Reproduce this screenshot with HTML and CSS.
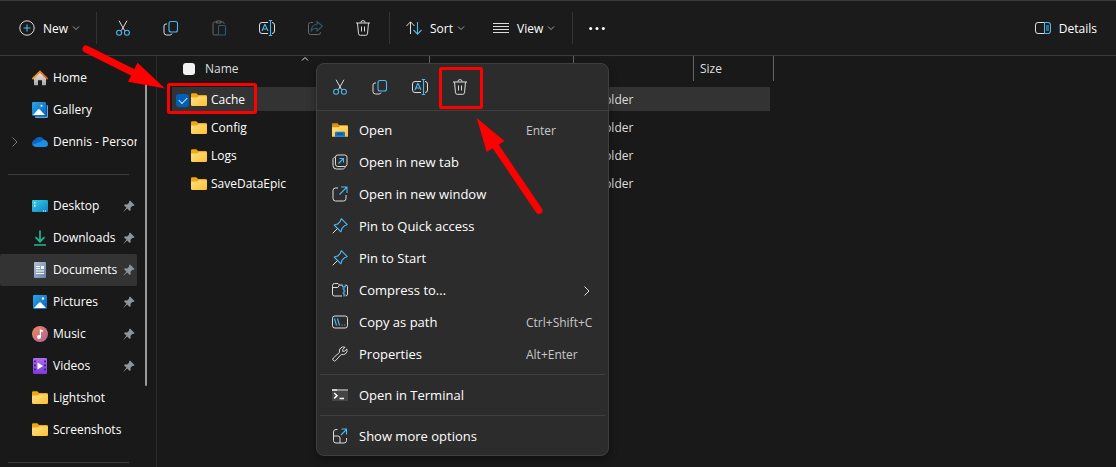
FILE: index.html
```html
<!DOCTYPE html>
<html lang="en">
<head>
<meta charset="utf-8">
<title>Documents</title>
<link rel="stylesheet" href="styles.css">
</head>
<body>
<svg class="defs" aria-hidden="true">
  <defs>
    <linearGradient id="gFolder" x1="0" y1="0" x2="1" y2="1"><stop offset="0" stop-color="#ffe08a"/><stop offset="1" stop-color="#fbc02f"/></linearGradient>
    <linearGradient id="gBlue" x1="0" y1="0" x2="1" y2="1"><stop offset="0" stop-color="#2aa5ea"/><stop offset="1" stop-color="#0a62b8"/></linearGradient>
    <linearGradient id="gDesk" x1="0" y1="0" x2="1" y2="1"><stop offset="0" stop-color="#3ad0ea"/><stop offset="1" stop-color="#0b7fc4"/></linearGradient>
    <linearGradient id="gHome" x1="0" y1="0" x2="0" y2="1"><stop offset="0" stop-color="#e8e8e8"/><stop offset="1" stop-color="#a9a9a9"/></linearGradient>
    <linearGradient id="gRoof" x1="0" y1="0" x2="1" y2="0"><stop offset="0" stop-color="#f0a020"/><stop offset="1" stop-color="#e0601a"/></linearGradient>
    <linearGradient id="gDoc" x1="0" y1="0" x2="1" y2="1"><stop offset="0" stop-color="#b4c3d6"/><stop offset="1" stop-color="#6583a6"/></linearGradient>
    <linearGradient id="gMusic" x1="0" y1="0" x2="1" y2="1"><stop offset="0" stop-color="#f08a5c"/><stop offset="1" stop-color="#b0609a"/></linearGradient>
    <linearGradient id="gVideo" x1="0" y1="0" x2="0" y2="1"><stop offset="0" stop-color="#b06cf0"/><stop offset="1" stop-color="#7a3bdc"/></linearGradient>
  </defs>
  <symbol id="cut" viewBox="0 0 16 16"><path class="w" d="M4 .7l5.600 9.900M12 .7L6.400 10.600"/><circle class="b" cx="4.100" cy="12.700" r="2.500"/><circle class="b" cx="11.900" cy="12.700" r="2.500"/></symbol>
  <symbol id="copy" viewBox="0 0 16 16"><path class="w" d="M4 4H3a2 2 0 0 0-2 2v6.500a2.500 2.500 0 0 0 2.500 2.500H7a2 2 0 0 0 2-1.500"/><rect class="b" x="6" y="1.500" width="8.500" height="10.500" rx="2"/></symbol>
  <symbol id="paste" viewBox="0 0 16 16"><path class="w" d="M5.500 2H3.500A1.500 1.500 0 0 0 2 3.500v10A1.500 1.500 0 0 0 3.500 15H7M10 2h1.500A1.500 1.500 0 0 1 13 3.500V4M5.500 1h4.500v2h-4.500z"/><rect class="b" x="7.500" y="5.500" width="7" height="9.500" rx="1"/></symbol>
  <symbol id="rename" viewBox="0 0 16 16"><path class="w" d="M9 2.500H3A2.500 2.500 0 0 0 .500 5v6A2.500 2.500 0 0 0 3 13.500h6M13 2.500a2.500 2.500 0 0 1 2.500 2.500v6a2.500 2.500 0 0 1-2.500 2.500"/><path class="b" d="M3 11l2.700-6.500h.4L9 11M4 9h4M11.500.500v15M9.800.500h3.400M9.800 15.500h3.400"/></symbol>
  <symbol id="share" viewBox="0 0 16 16"><path class="w" d="M6 2.500H3.500a2 2 0 0 0-2 2v8a2 2 0 0 0 2 2h8a2 2 0 0 0 2-2V12"/><path class="b" d="M10 1.500l5.300 4.700L10 11V8.300c-2.800 0-4.400.800-5.800 2.700.2-4 2.200-6.300 5.800-6.700z"/></symbol>
  <symbol id="trash" viewBox="0 0 16 16"><path class="w" d="M1 3h14M5.800 2.800a2.200 2.200 0 0 1 4.400 0M2.500 3l1 10.700a1.800 1.800 0 0 0 1.800 1.600h5.400a1.800 1.800 0 0 0 1.800-1.600L13.500 3M6.500 6.500v5M9.500 6.500v5"/></symbol>
  <symbol id="chev" viewBox="0 0 8 8"><path class="w" d="M1 2.500l3 3 3-3"/></symbol>
  <symbol id="chevr" viewBox="0 0 8 12"><path class="w" d="M1.500 1.500L6 6l-4.500 4.500"/></symbol>
  <symbol id="pin" viewBox="0 0 12 12"><path d="M7 .500L11.500 5l-1 1-1-.2-2 2 .2 2.200-1 1-2.500-2.500L.800 11.500l-.3-.3L3.500 7.800 1 5.300l1-1 2.200.2 2-2L6 1.500z" fill="#8d949b"/></symbol>
  <symbol id="folder" viewBox="0 0 16 14"><path d="M0 1.500A1.300 1.300 0 0 1 1.300.200h4L7 2h7.700A1.300 1.300 0 0 1 16 3.300V6H0z" fill="#efa90e"/><path d="M0 4.500h6L7.500 3.300H15a1 1 0 0 1 1 1v7.400a1.300 1.300 0 0 1-1.300 1.300H1.300A1.300 1.300 0 0 1 0 11.700z" fill="url(#gFolder)"/></symbol>
  <symbol id="outpin" viewBox="0 0 16 16"><path class="b" d="M9.500.800l5.700 5.700c-.8 1-2 .9-2.700 1.200L9.800 10.500c-.2 1.300-.1 2.300-1 3.200L2.300 7.200c1-.9 2-.8 3.200-1L8.300 3.500c.3-.9.200-1.900 1.200-2.700z"/><path class="w" d="M5.300 10.700L.700 15.300"/></symbol>
</svg>

<header class="toolbar">
  <button class="tool tool-new"><svg class="i16" viewBox="0 0 16 16"><circle class="w" cx="8" cy="8" r="7.200"/><path class="b" d="M8 4.500v7M4.500 8h7"/></svg><span>New</span><svg class="i8"><use href="#chev"/></svg></button>
  <div class="divider"></div>
  <button class="tool tool-icon" aria-label="Cut"><svg class="i16"><use href="#cut"/></svg></button>
  <button class="tool tool-icon" aria-label="Copy"><svg class="i16"><use href="#copy"/></svg></button>
  <button class="tool tool-icon" aria-label="Paste" disabled><svg class="i16"><use href="#paste"/></svg></button>
  <button class="tool tool-icon" aria-label="Rename"><svg class="i16"><use href="#rename"/></svg></button>
  <button class="tool tool-icon" aria-label="Share" disabled><svg class="i16"><use href="#share"/></svg></button>
  <button class="tool tool-icon" aria-label="Delete"><svg class="i16"><use href="#trash"/></svg></button>
  <div class="divider"></div>
  <button class="tool tool-menu"><svg class="i16" viewBox="0 0 16 16"><path class="w" d="M4.500 14V2M.500 6l4-4.200 4 4.200"/><path class="b" d="M11.500 2v12M7.500 10l4 4.200 4-4.200"/></svg><span>Sort</span><svg class="i8"><use href="#chev"/></svg></button>
  <button class="tool tool-menu tool-view"><svg class="i16" viewBox="0 0 16 16"><path class="w" d="M0 3.500h16M0 6.500h16M0 9.500h16M0 12.500h16"/></svg><span>View</span><svg class="i8"><use href="#chev"/></svg></button>
  <div class="divider"></div>
  <button class="tool tool-more" aria-label="More"><svg class="i16" viewBox="0 0 16 16"><g fill="#fff"><circle cx="1.700" cy="8.500" r="1.500"/><circle cx="8" cy="8.500" r="1.500"/><circle cx="14.300" cy="8.500" r="1.500"/></g></svg></button>
  <button class="tool tool-details"><svg class="i16" viewBox="0 0 16 16"><path class="w" d="M9.500 2.500H3A2.500 2.500 0 0 0 .500 5v6A2.500 2.500 0 0 0 3 13.500h6.500"/><path class="b" d="M9.500 2.500H13A2.500 2.500 0 0 1 15.500 5v6a2.500 2.500 0 0 1-2.500 2.500H9.500zM11 6h3M11 8h3M11 10h3"/></svg><span>Details</span></button>
</header>

<div class="body">
  <nav class="sidebar" aria-label="Folders">
    <div class="side-scroll">
      <a class="place" href="#"><span class="expand"></span><svg class="i16" viewBox="0 0 16 16"><path d="M2 7l6-5.500L14 7v7.500a.8.8 0 0 1-.8.8H10v-5H6v5H2.800a.8.8 0 0 1-.8-.8z" fill="url(#gHome)"/><path d="M1 8.500l7-7 7 7" fill="none" stroke="url(#gRoof)" stroke-width="1.800" stroke-linecap="round"/></svg><span>Home</span></a>
      <a class="place" href="#"><span class="expand"></span><svg class="i16" viewBox="0 0 16 16"><path d="M3 3h12a1 1 0 0 1 1 1v10.500a1.500 1.500 0 0 1-1.500 1.500H4a1 1 0 0 1-1-1z" fill="#5ba8e6"/><path d="M14 2.500l.8.500v11.500H3v-.7z" fill="#123a63"/><rect width="14" height="14" rx="1.300" fill="url(#gBlue)"/><path d="M1 13l5-5.500a1.200 1.200 0 0 1 1.700 0L13 13z" fill="#fff"/><circle cx="9.500" cy="3.800" r="1" fill="#fff"/></svg><span>Gallery</span></a>
      <a class="place" href="#"><span class="expand"><svg class="i12 dim"><use href="#chevr"/></svg></span><svg class="i16" viewBox="0 0 16 16"><path d="M1 12A4 4 0 0 1 3 5.500 5.500 5.500 0 0 1 12.500 6L9 10z" fill="#0a64c0"/><path d="M3.500 13a3.300 3.300 0 0 1-2.800-2.500L9 7.500c3-2.800 6.500-1 7 2.200A3.300 3.300 0 0 1 12.800 13z" fill="#1b8fe4"/></svg><span>Dennis - Personal</span></a>
      <hr>
      <a class="place" href="#"><span class="expand"></span><svg class="i16" viewBox="0 0 16 16"><rect y="2" width="16" height="12" rx="1" fill="url(#gDesk)"/><path d="M2 4h1.500v1.500H2zM2 7h1.500v1.500H2zM11 12.500h1v1h-1zM13 12.500h1v1h-1z" fill="#fff"/></svg><span>Desktop</span><svg class="pin"><use href="#pin"/></svg></a>
      <a class="place" href="#"><span class="expand"></span><svg class="i16" viewBox="0 0 16 16"><path d="M8 .500v11M3.500 7.200L8 11.700l4.500-4.500M2 15h12" fill="none" stroke="#22b78e" stroke-width="1.700"/></svg><span>Downloads</span><svg class="pin"><use href="#pin"/></svg></a>
      <a class="place current" href="#"><span class="expand"></span><svg class="i16" viewBox="0 0 16 16"><rect x="2" width="12" height="16" rx="1" fill="url(#gDoc)"/><path d="M4 4.500h4M4 6.500h4M4 9h8M4 11.500h8" stroke="#fff" stroke-width="1.200"/><path d="M9 4h3v3H9z" fill="#fff"/></svg><span>Documents</span><svg class="pin"><use href="#pin"/></svg></a>
      <a class="place" href="#"><span class="expand"></span><svg class="i16" viewBox="0 0 16 16"><rect x="1" y="1" width="14" height="14" rx="1" fill="url(#gBlue)"/><path d="M2 14l5.200-5.500a1.200 1.200 0 0 1 1.600 0L14 14z" fill="#fff"/><circle cx="11" cy="4.500" r="1.200" fill="#fff"/></svg><span>Pictures</span><svg class="pin"><use href="#pin"/></svg></a>
      <a class="place" href="#"><span class="expand"></span><svg class="i16" viewBox="0 0 16 16"><circle cx="8" cy="8" r="8" fill="url(#gMusic)"/><circle cx="7" cy="11" r="2" fill="#fff"/><path d="M7.800 11V3l3 1.200v2L9 5.500V11z" fill="#fff"/></svg><span>Music</span><svg class="pin"><use href="#pin"/></svg></a>
      <a class="place" href="#"><span class="expand"></span><svg class="i16" viewBox="0 0 16 16"><rect x="1" width="14" height="16" rx="1.200" fill="url(#gVideo)"/><path d="M5.500 4.500v7L11 8z" fill="#fff"/><path d="M3 2.500v12M13 2.500v12" stroke="#3a1a78" stroke-width="1.700" stroke-dasharray="1.700 2.300"/></svg><span>Videos</span><svg class="pin"><use href="#pin"/></svg></a>
      <a class="place" href="#"><span class="expand"></span><svg class="folder"><use href="#folder"/></svg><span>Lightshot</span></a>
      <a class="place" href="#"><span class="expand"></span><svg class="folder"><use href="#folder"/></svg><span>Screenshots</span></a>
      <hr>
    </div>
    <div class="scrollbar"></div>
  </nav>

  <main class="files">
    <table class="list">
      <thead>
        <tr>
          <th class="col-name"><div class="head head-name"><input type="checkbox" class="tick" aria-label="Select all"><span>Name</span><svg class="i8 sorted"><use href="#chev"/></svg></div></th>
          <th class="col-date"><div class="head"></div></th>
          <th class="col-type"><div class="head"></div></th>
          <th class="col-size"><div class="head head-last">Size</div></th>
        </tr>
      </thead>
      <tbody>
        <tr class="selected"><td><div class="file"><input type="checkbox" class="tick" id="cache" checked><svg class="folder"><use href="#folder"/></svg><label for="cache">Cache</label></div></td><td></td><td>File folder</td><td></td></tr>
        <tr><td><div class="file"><svg class="folder"><use href="#folder"/></svg><span>Config</span></div></td><td></td><td>File folder</td><td></td></tr>
        <tr><td><div class="file"><svg class="folder"><use href="#folder"/></svg><span>Logs</span></div></td><td></td><td>File folder</td><td></td></tr>
        <tr><td><div class="file"><svg class="folder"><use href="#folder"/></svg><span>SaveDataEpic</span></div></td><td></td><td>File folder</td><td></td></tr>
      </tbody>
    </table>
  </main>
</div>

<div class="menu" role="menu">
  <div class="quick">
    <button aria-label="Cut"><svg class="i16"><use href="#cut"/></svg></button>
    <button aria-label="Copy"><svg class="i16"><use href="#copy"/></svg></button>
    <button aria-label="Rename"><svg class="i16"><use href="#rename"/></svg></button>
    <button aria-label="Delete"><svg class="i16"><use href="#trash"/></svg></button>
  </div>
  <div class="group">
    <button class="entry" role="menuitem"><svg class="i16" viewBox="0 0 16 16"><path d="M0 2.300A1 1 0 0 1 1 1.300h4.500L7 3h8a1 1 0 0 1 1 1v3H0z" fill="#d9920c"/><path d="M0 5.300h6.500L8 4h7a1 1 0 0 1 1 1v9.700H0z" fill="url(#gFolder)"/><path d="M3 14.700v-4a1 1 0 0 1 1-1h8a1 1 0 0 1 1 1v4z" fill="#1277d2"/><path d="M5 12h6" stroke="#0b4a8c" stroke-width="1.200"/></svg><span class="what">Open</span><span class="keys">Enter</span></button>
    <button class="entry" role="menuitem"><svg class="i16" viewBox="0 0 16 16"><rect class="w" x="3.500" y="1" width="11.500" height="11.500" rx="2.200"/><path class="w" d="M3.500 3C2 3.300 1 4 1 5.500v6A3.500 3.500 0 0 0 4.500 15h6c1.500 0 2.400-.8 2.700-2.300"/><path class="b" d="M6.500 9.500L11 5M7.500 4.500h4v4"/></svg><span class="what">Open in new tab</span></button>
    <button class="entry" role="menuitem"><svg class="i16" viewBox="0 0 16 16"><path class="w" d="M6 2H3.500A2.500 2.500 0 0 0 1 4.500v8A2.500 2.500 0 0 0 3.500 15h8a2.500 2.500 0 0 0 2.500-2.500V9"/><path class="b" d="M7.500 8.500l7-7M9 1h6v6"/></svg><span class="what">Open in new window</span></button>
    <button class="entry" role="menuitem"><svg class="i16"><use href="#outpin"/></svg><span class="what">Pin to Quick access</span></button>
    <button class="entry" role="menuitem"><svg class="i16"><use href="#outpin"/></svg><span class="what">Pin to Start</span></button>
    <button class="entry" role="menuitem"><svg class="i16" viewBox="0 0 16 16"><path class="w" d="M10 3H7.500L6 1.500H2.500a2 2 0 0 0-2 2v8.500a2 2 0 0 0 2 2h7.500M.500 5.500h5.300L7.500 3M14 3a1.700 1.700 0 0 1 1.500 1.700V12a2 2 0 0 1-1.700 2"/><path class="b" d="M10.500 2.500v2.200h2.800V2.500M12 5v9.500M10.500 7H12M12 9h1.500M10.500 11H12M12 13h1.500"/></svg><span class="what">Compress to...</span><span class="keys"><svg class="i12 more"><use href="#chevr"/></svg></span></button>
    <button class="entry" role="menuitem"><svg class="i16" viewBox="0 0 16 16"><rect class="w" x=".500" y="2" width="15" height="12" rx="2.300"/><path class="b" d="M2.500 4.500l2 7M5.500 4.500l2 7M9.500 11h1M12.300 11h1"/></svg><span class="what">Copy as path</span><span class="keys">Ctrl+Shift+C</span></button>
    <button class="entry" role="menuitem"><svg class="i16" viewBox="0 0 16 16"><path class="w" d="M13 1.200L10.700 3.600v1.700h1.700L14.800 3a4.200 4.200 0 0 1-5.500 5.400l-5.500 6a1.700 1.700 0 0 1-2.500-2.400l6.200-5.600A4.200 4.200 0 0 1 13 1.200z"/></svg><span class="what">Properties</span><span class="keys">Alt+Enter</span></button>
  </div>
  <hr>
  <div class="group">
    <button class="entry" role="menuitem"><svg class="i16" viewBox="0 0 16 16"><rect y="2" width="16" height="12" fill="#454545"/><path d="M0 2h16v2H0z" fill="#8b8b8b"/><path d="M0 2h5v2H0z" fill="#d0d0d0"/><path d="M2.200 6l2.800 2.700-2.800 2.700M7.500 11.500h4.500" fill="none" stroke="#fff" stroke-width="1.500"/></svg><span class="what">Open in Terminal</span></button>
  </div>
  <hr>
  <div class="group">
    <button class="entry" role="menuitem"><svg class="i16" viewBox="0 0 16 16"><path class="w" d="M5.500 1.500H4A2.500 2.500 0 0 0 1.500 4v8.500A2.500 2.500 0 0 0 4 15h8a2.500 2.500 0 0 0 2.500-2.500V10M1.500 8H6a2 2 0 0 1 2 2v5"/><path class="b" d="M9 7l5.500-5.500M9.500 1h5v5.500"/></svg><span class="what">Show more options</span></button>
  </div>
</div>

<svg class="marks" viewBox="0 0 1116 467" aria-hidden="true">
  <g fill="none" stroke="#fe0000">
    <rect x="168.500" y="84.500" width="87" height="28" rx="1" stroke-width="3"/>
    <rect x="440.500" y="68.500" width="41" height="39" rx="1" stroke-width="3"/>
    <path d="M86 49l50 25M539 210.500L492 141" stroke-width="7" stroke-linecap="round"/>
  </g>
  <path d="M165 88.500l-37-6.800 9.500-19zM476.700 118l27.800 23-17.800 11z" fill="#fe0000"/>
</svg>
</body>
</html>
```
FILE: styles.css
```css
* { box-sizing: border-box; }

body {
  margin: 0;
  min-height: 100vh;
  display: flex;
  flex-direction: column;
  position: relative;
  overflow: hidden;
  background: #191919;
  color: #fff;
  font: 12px/16px "Open Sans", "Noto Sans", sans-serif;
}

button {
  margin: 0;
  padding: 0;
  border: 0;
  background: none;
  color: inherit;
  font: inherit;
  text-align: left;
}

svg { display: block; flex: none; }
.defs { position: absolute; width: 0; height: 0; }
.i16 { width: 16px; height: 16px; }
.i12 { width: 8px; height: 12px; }
.i8 { width: 8px; height: 8px; }
.folder { width: 16px; height: 14px; }
.w { fill: none; stroke: #dcdcdc; stroke-width: 1; }
.b { fill: none; stroke: #4cb9f0; stroke-width: 1.1; }

/* Command bar */
.toolbar {
  display: flex;
  align-items: center;
  height: 56px;
  border-top: 1px solid #3b3b3b;
  border-bottom: 1px solid #3b3b3b;
  background: #1b1b1b;
}
.tool {
  display: flex;
  align-items: center;
  gap: 8px;
  height: 32px;
  flex: none;
}
.tool span { padding-top: 2px; }
.tool-new { width: 94px; padding-left: 19px; }
.tool-icon { width: 48px; justify-content: center; }
.tool-more { width: 44px; justify-content: center; }
.tool-menu { width: 87px; padding-left: 14px; }
.tool-view { width: 91px; }
.tool span + .i8 { margin-left: -4px; opacity: .7; }
.tool-details { margin-left: auto; padding-right: 19px; }
.divider { width: 1px; height: 32px; margin: 0 2px; background: #333; }
.tool:disabled svg { opacity: .4; }

/* Navigation pane */
.body { display: flex; flex: 1; min-height: 0; }
.sidebar {
  display: flex;
  width: 157px;
  flex: none;
  border-right: 1px solid #2b2b2b;
}
.side-scroll { width: 137px; padding-top: 6px; }
.place {
  display: flex;
  align-items: center;
  height: 32px;
  gap: 5px;
  overflow: hidden;
  color: inherit;
  text-decoration: none;
  white-space: nowrap;
}
.place.current { background: #333; border-radius: 2px; }
.expand { width: 27px; padding-left: 11px; flex: none; }
.dim { opacity: .5; }
.pin { width: 12px; height: 12px; margin: 0 2px 0 auto; }
.side-scroll hr {
  height: 1px;
  margin: 16px 8px 15px;
  border: 0;
  background: #3d3d3d;
}
.scrollbar {
  width: 2px;
  height: 302px;
  margin: 28px 0 0 8px;
  border-radius: 1px;
  background: #9a9a9a;
}

/* File list */
.files { flex: 1; padding-left: 15px; }
.list { width: 598px; border-spacing: 0; table-layout: fixed; }
.list th, .list td { padding: 0; text-align: left; font-weight: 400; }
.list th { height: 29px; vertical-align: top; color: #dedede; }
.col-name { width: 258px; }
.col-date { width: 144px; }
.col-type { width: 120px; }
.col-size { width: 76px; }
.head {
  display: flex;
  align-items: center;
  height: 25px;
  padding-left: 6px;
  border-right: 1px solid #636363;
}
.head-last { margin-right: -4px; }
.head-name { position: relative; padding-left: 11px; gap: 10px; }
.sorted { position: absolute; left: 129px; top: -1px; transform: scaleY(-1); }
.list td {
  height: 28px;
  padding-top: 2px;
  border: solid #191919;
  border-width: 2px 0;
}
.list td:nth-child(3) { padding-left: 4px; color: #dedede; }
.selected { background: #333; }
.file { display: flex; align-items: center; gap: 4px; padding-left: 19px; }
.file .tick { margin: 0 -2px 0 -15px; }

.tick {
  appearance: none;
  display: grid;
  place-items: center;
  width: 12px;
  height: 12px;
  margin: 0;
  border-radius: 3px;
  background: #f2f2f2;
}
.tick:checked { width: 13px; height: 13px; background: #005fb8; }
.tick:checked::after {
  content: "";
  width: 7px;
  height: 4px;
  margin-top: -2px;
  border: solid #d5e6f5;
  border-width: 0 0 1px 1px;
  transform: rotate(-45deg);
}

/* Context menu */
.menu {
  position: absolute;
  left: 316px;
  top: 63px;
  width: 293px;
  border: 1px solid #3f3f3f;
  border-radius: 8px;
  background: #2c2c2c;
  box-shadow: 0 4px 8px rgba(0, 0, 0, .35);
  font-size: 13px;
  padding-bottom: 3px;
}
.quick {
  display: flex;
  height: 47px;
  margin-bottom: 3px;
  padding: 0 3px;
  border-bottom: 1px solid #3f3f3f;
}
.quick button { display: grid; place-items: center; width: 40px; }
.entry {
  display: flex;
  align-items: center;
  width: 100%;
  height: 32px;
  padding-left: 15px;
}
.what { flex: 1; padding-left: 11px; white-space: nowrap; }
.keys { width: 82px; padding-top: 2px; color: #c8c8c8; font-size: 12px; white-space: nowrap; }
.more { margin-left: 57px; }
.menu hr { height: 1px; margin: 4px 3px; border: 0; background: #3f3f3f; }

/* Highlight boxes and arrows */
.marks {
  position: absolute;
  left: 0;
  top: 0;
  width: 1116px;
  height: 467px;
  pointer-events: none;
}
```
